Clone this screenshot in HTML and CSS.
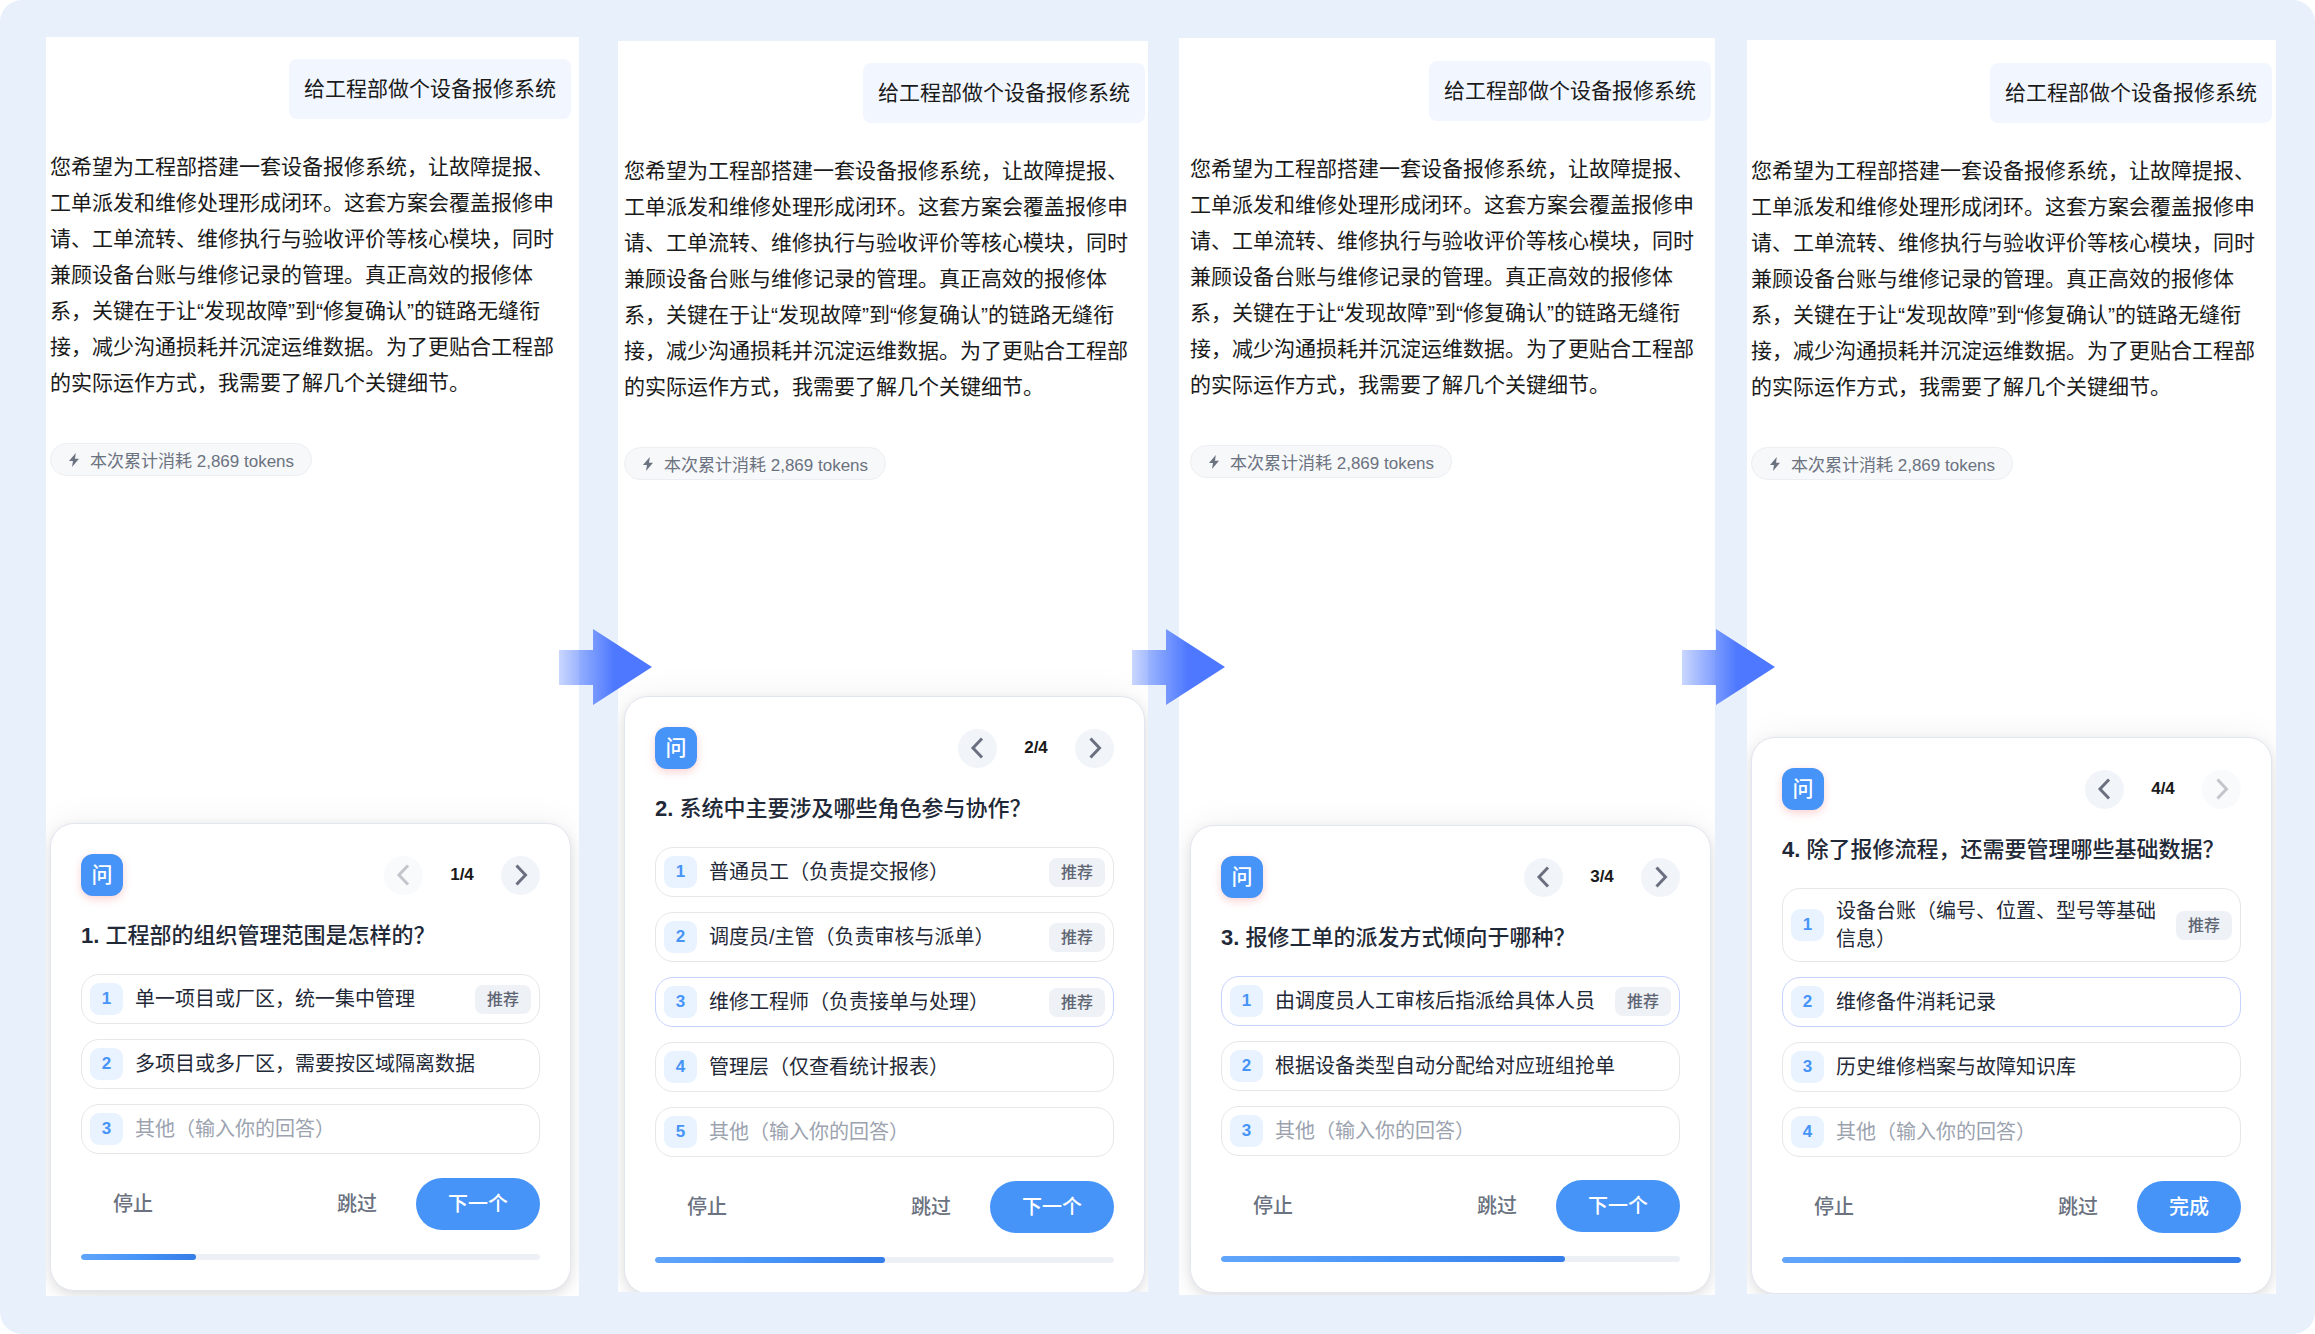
FILE: index.html
```html
<!DOCTYPE html>
<html lang="zh-CN">
<head>
<meta charset="utf-8">
<title>设备报修系统</title>
<link rel="stylesheet" href="styles.css">
</head>
<body>
<svg class="defs" aria-hidden="true">
  <defs>
    <linearGradient id="arrow-fill" x1="0" x2="1" y1="0" y2="0">
      <stop offset="0" stop-color="#4d78ff" stop-opacity=".3"/>
      <stop offset=".6" stop-color="#4d78ff"/>
      <stop offset="1" stop-color="#4d78ff"/>
    </linearGradient>
    <symbol id="arrow" viewBox="0 0 93 76"><path d="M0 21H34V0L93 38L34 76V56H0Z" fill="url(#arrow-fill)"/></symbol>
    <symbol id="bolt" viewBox="0 0 12 16"><path d="M7.800 1L1 9H5L4 15L11 6.700H7Z" fill="currentColor"/></symbol>
    <symbol id="prev" viewBox="0 0 24 24"><path d="M16 2.500L7 12L16 21.500" fill="none" stroke="currentColor" stroke-width="3"/></symbol>
    <symbol id="next" viewBox="0 0 24 24"><path d="M7.500 2.500L16.500 12L7.500 21.500" fill="none" stroke="currentColor" stroke-width="3"/></symbol>
  </defs>
</svg>
<main class="stage">
  <section class="step step-1">
    <div class="panel">
      <p class="bubble">给工程部做个设备报修系统</p>
      <p class="reply">您希望为工程部搭建一套设备报修系统，让故障提报、工单派发和维修处理形成闭环。这套方案会覆盖报修申请、工单流转、维修执行与验收评价等核心模块，同时兼顾设备台账与维修记录的管理。真正高效的报修体系，关键在于让“发现故障”到“修复确认”的链路无缝衔接，减少沟通损耗并沉淀运维数据。为了更贴合工程部的实际运作方式，我需要了解几个关键细节。</p>
      <p class="tokens"><svg class="bolt"><use href="#bolt"/></svg>本次累计消耗 2,869 tokens</p>
      <form class="card">
        <div class="card-head">
          <span class="badge">问</span>
          <div class="pager">
            <button type="button" class="page-btn" aria-label="上一题" disabled><svg class="chevron"><use href="#prev"/></svg></button>
            <span class="count">1/4</span>
            <button type="button" class="page-btn" aria-label="下一题"><svg class="chevron"><use href="#next"/></svg></button>
          </div>
        </div>
        <h2 class="question"><b>1.</b> 工程部的组织管理范围是怎样的？</h2>
        <div class="options">
          <button type="button" class="option"><span class="num">1</span><span class="text">单一项目或厂区，统一集中管理</span><span class="tag">推荐</span></button>
          <button type="button" class="option"><span class="num">2</span><span class="text">多项目或多厂区，需要按区域隔离数据</span></button>
          <label class="option"><span class="num">3</span><input class="other" type="text" placeholder="其他（输入你的回答）"></label>
        </div>
        <div class="actions">
          <button type="button" class="btn">停止</button>
          <button type="button" class="btn skip">跳过</button>
          <button type="button" class="btn primary">下一个</button>
        </div>
        <div class="track"><div class="bar" style="width:25%"></div></div>
      </form>
    </div>
  </section>

  <section class="step step-2">
    <svg class="arrow" aria-hidden="true"><use href="#arrow"/></svg>
    <div class="panel">
      <p class="bubble">给工程部做个设备报修系统</p>
      <p class="reply">您希望为工程部搭建一套设备报修系统，让故障提报、工单派发和维修处理形成闭环。这套方案会覆盖报修申请、工单流转、维修执行与验收评价等核心模块，同时兼顾设备台账与维修记录的管理。真正高效的报修体系，关键在于让“发现故障”到“修复确认”的链路无缝衔接，减少沟通损耗并沉淀运维数据。为了更贴合工程部的实际运作方式，我需要了解几个关键细节。</p>
      <p class="tokens"><svg class="bolt"><use href="#bolt"/></svg>本次累计消耗 2,869 tokens</p>
      <form class="card">
        <div class="card-head">
          <span class="badge">问</span>
          <div class="pager">
            <button type="button" class="page-btn" aria-label="上一题"><svg class="chevron"><use href="#prev"/></svg></button>
            <span class="count">2/4</span>
            <button type="button" class="page-btn" aria-label="下一题"><svg class="chevron"><use href="#next"/></svg></button>
          </div>
        </div>
        <h2 class="question"><b>2.</b> 系统中主要涉及哪些角色参与协作？</h2>
        <div class="options">
          <button type="button" class="option"><span class="num">1</span><span class="text">普通员工（负责提交报修）</span><span class="tag">推荐</span></button>
          <button type="button" class="option"><span class="num">2</span><span class="text">调度员/主管（负责审核与派单）</span><span class="tag">推荐</span></button>
          <button type="button" class="option active"><span class="num">3</span><span class="text">维修工程师（负责接单与处理）</span><span class="tag">推荐</span></button>
          <button type="button" class="option"><span class="num">4</span><span class="text">管理层（仅查看统计报表）</span></button>
          <label class="option"><span class="num">5</span><input class="other" type="text" placeholder="其他（输入你的回答）"></label>
        </div>
        <div class="actions">
          <button type="button" class="btn">停止</button>
          <button type="button" class="btn skip">跳过</button>
          <button type="button" class="btn primary">下一个</button>
        </div>
        <div class="track"><div class="bar" style="width:50%"></div></div>
      </form>
    </div>
  </section>

  <section class="step step-3">
    <svg class="arrow" aria-hidden="true"><use href="#arrow"/></svg>
    <div class="panel">
      <p class="bubble">给工程部做个设备报修系统</p>
      <p class="reply">您希望为工程部搭建一套设备报修系统，让故障提报、工单派发和维修处理形成闭环。这套方案会覆盖报修申请、工单流转、维修执行与验收评价等核心模块，同时兼顾设备台账与维修记录的管理。真正高效的报修体系，关键在于让“发现故障”到“修复确认”的链路无缝衔接，减少沟通损耗并沉淀运维数据。为了更贴合工程部的实际运作方式，我需要了解几个关键细节。</p>
      <p class="tokens"><svg class="bolt"><use href="#bolt"/></svg>本次累计消耗 2,869 tokens</p>
      <form class="card">
        <div class="card-head">
          <span class="badge">问</span>
          <div class="pager">
            <button type="button" class="page-btn" aria-label="上一题"><svg class="chevron"><use href="#prev"/></svg></button>
            <span class="count">3/4</span>
            <button type="button" class="page-btn" aria-label="下一题"><svg class="chevron"><use href="#next"/></svg></button>
          </div>
        </div>
        <h2 class="question"><b>3.</b> 报修工单的派发方式倾向于哪种？</h2>
        <div class="options">
          <button type="button" class="option active"><span class="num">1</span><span class="text">由调度员人工审核后指派给具体人员</span><span class="tag">推荐</span></button>
          <button type="button" class="option"><span class="num">2</span><span class="text">根据设备类型自动分配给对应班组抢单</span></button>
          <label class="option"><span class="num">3</span><input class="other" type="text" placeholder="其他（输入你的回答）"></label>
        </div>
        <div class="actions">
          <button type="button" class="btn">停止</button>
          <button type="button" class="btn skip">跳过</button>
          <button type="button" class="btn primary">下一个</button>
        </div>
        <div class="track"><div class="bar" style="width:75%"></div></div>
      </form>
    </div>
  </section>

  <section class="step step-4">
    <svg class="arrow" aria-hidden="true"><use href="#arrow"/></svg>
    <div class="panel">
      <p class="bubble">给工程部做个设备报修系统</p>
      <p class="reply">您希望为工程部搭建一套设备报修系统，让故障提报、工单派发和维修处理形成闭环。这套方案会覆盖报修申请、工单流转、维修执行与验收评价等核心模块，同时兼顾设备台账与维修记录的管理。真正高效的报修体系，关键在于让“发现故障”到“修复确认”的链路无缝衔接，减少沟通损耗并沉淀运维数据。为了更贴合工程部的实际运作方式，我需要了解几个关键细节。</p>
      <p class="tokens"><svg class="bolt"><use href="#bolt"/></svg>本次累计消耗 2,869 tokens</p>
      <form class="card">
        <div class="card-head">
          <span class="badge">问</span>
          <div class="pager">
            <button type="button" class="page-btn" aria-label="上一题"><svg class="chevron"><use href="#prev"/></svg></button>
            <span class="count">4/4</span>
            <button type="button" class="page-btn" aria-label="下一题" disabled><svg class="chevron"><use href="#next"/></svg></button>
          </div>
        </div>
        <h2 class="question"><b>4.</b> 除了报修流程，还需要管理哪些基础数据？</h2>
        <div class="options">
          <button type="button" class="option"><span class="num">1</span><span class="text">设备台账（编号、位置、型号等基础信息）</span><span class="tag">推荐</span></button>
          <button type="button" class="option active"><span class="num">2</span><span class="text">维修备件消耗记录</span></button>
          <button type="button" class="option"><span class="num">3</span><span class="text">历史维修档案与故障知识库</span></button>
          <label class="option"><span class="num">4</span><input class="other" type="text" placeholder="其他（输入你的回答）"></label>
        </div>
        <div class="actions">
          <button type="button" class="btn">停止</button>
          <button type="button" class="btn skip">跳过</button>
          <button type="button" class="btn primary">完成</button>
        </div>
        <div class="track"><div class="bar" style="width:100%"></div></div>
      </form>
    </div>
  </section>
</main>
</body>
</html>
```
FILE: styles.css
```css
* {
  box-sizing: border-box;
}

body {
  margin: 0;
  background: #fff;
  color: #1a1a1a;
  font-family: "Liberation Sans", "Noto Sans CJK SC", sans-serif;
}

p,
h2 {
  margin: 0;
}

button,
input {
  padding: 0;
  border: 0;
  background: none;
  color: inherit;
  font: inherit;
}

.defs {
  position: absolute;
  width: 0;
  height: 0;
}

.stage {
  display: flex;
  min-height: 100vh;
  padding: 37px 39px 38px 46px;
  border-radius: 22px;
  background: #e8f0fb;
}

/* One step of the flow: a cropped chat panel, with the arrow that leads to it. */
.step {
  position: relative;
  display: flex;
  min-width: 0;
}

.step-1 {
  flex: 533 1 0;
}

.step-2 {
  flex: 530 1 0;
  margin: 4px 0 4px 39px;
}

.step-3 {
  flex: 536 1 0;
  margin: 1px 0 1px 31px;
}

.step-4 {
  flex: 529 1 0;
  margin: 3px 0 2px 32px;
}

.panel {
  display: flex;
  flex: 1;
  flex-direction: column;
  align-items: flex-start;
  min-width: 0;
  overflow: hidden;
  background: #fff;
}

.step-1 .panel {
  padding: 22px 8px 5px 4px;
}

.step-2 .panel {
  padding: 22px 3px 0 6px;
}

.step-3 .panel {
  padding: 23px 4px 2px 11px;
}

.step-4 .panel {
  padding: 23px 4px 0 4px;
}

/* The second panel cuts off the lower edge of its card. */
.step-2 .card {
  margin-bottom: -2px;
}

.arrow {
  position: absolute;
  z-index: 1;
  top: 50%;
  left: -59px;
  width: 93px;
  height: 76px;
  margin-top: -38px;
}

.step-3 .arrow {
  left: -47px;
}

.step-4 .arrow {
  left: -65px;
}

.bubble {
  align-self: flex-end;
  padding: 12px 15px;
  border-radius: 8px;
  background: #f2f7ff;
  font-size: 21px;
  line-height: 36px;
}

.reply {
  margin-top: 30px;
  font-size: 21px;
  line-height: 36px;
}

.tokens {
  display: flex;
  align-items: center;
  gap: 10px;
  height: 33px;
  margin-top: 42px;
  padding: 0 17px;
  border: 1px solid #eceef1;
  border-radius: 17px;
  background: #f7f8fa;
  color: #6b7280;
  font-size: 17px;
}

.bolt {
  width: 12px;
  height: 16px;
}

.card {
  width: 100%;
  margin-top: auto;
  padding: 30px;
  border: 1px solid #e2e6f0;
  border-radius: 24px;
  background: #fff;
  box-shadow: 0 4px 12px rgba(0, 0, 0, .1), 0 0 36px rgba(0, 0, 0, .06);
}

.card-head {
  display: flex;
  align-items: center;
  justify-content: space-between;
}

.badge {
  width: 42px;
  height: 42px;
  border-radius: 12px;
  background: #4794f8;
  box-shadow: 0 3px 9px rgba(240, 80, 80, .25);
  color: #fff;
  font-size: 21px;
  font-weight: 500;
  line-height: 42px;
  text-align: center;
}

.pager {
  display: flex;
  align-items: center;
}

.page-btn {
  display: flex;
  align-items: center;
  justify-content: center;
  width: 39px;
  height: 39px;
  border-radius: 50%;
  background: #f1f4f9;
  color: #6b7080;
}

.page-btn:disabled {
  opacity: .4;
}

.chevron {
  width: 24px;
  height: 24px;
}

.count {
  width: 78px;
  font-size: 17px;
  font-weight: 700;
  text-align: center;
}

.question {
  margin: 24px 0 22px;
  color: #1f2937;
  font-size: 22px;
  font-weight: 500;
  line-height: 32px;
  white-space: nowrap;
}

.options {
  display: flex;
  flex-direction: column;
  gap: 15px;
}

.option {
  display: flex;
  align-items: center;
  width: 100%;
  padding: 8px;
  border: 1px solid #e5e7eb;
  border-radius: 18px;
  background: #fff;
  color: #1f2937;
  font-size: 20px;
  line-height: 28px;
  text-align: left;
}

.option.active {
  border-color: #c7d2fe;
}

.num {
  flex: none;
  width: 33px;
  height: 32px;
  margin-right: 12px;
  border-radius: 9px;
  background: #e8f3ff;
  color: #4794f8;
  font-size: 17px;
  font-weight: 700;
  line-height: 32px;
  text-align: center;
}

.text {
  flex: 1;
}

.tag {
  flex: none;
  margin-left: 15px;
  padding: 0 12px;
  border-radius: 8px;
  background: #eef1f6;
  color: #5f6673;
  font-size: 16px;
  font-weight: 500;
  line-height: 29px;
}

.other {
  flex: 1;
  min-width: 0;
  height: 28px;
  outline: 0;
}

.other::placeholder {
  color: #9ca3af;
  opacity: 1;
}

.actions {
  display: flex;
  align-items: center;
  gap: 7px;
  margin: 24px 0;
}

.btn {
  height: 52px;
  padding: 0 32px;
  border-radius: 26px;
  color: #6b7280;
  font-size: 20px;
  font-weight: 500;
  line-height: 28px;
}

.skip {
  margin-left: auto;
}

.primary {
  background: #4794f8;
  color: #fff;
}

.track {
  height: 6px;
  overflow: hidden;
  border-radius: 3px;
  background: #edf0f5;
}

.bar {
  height: 100%;
  border-radius: 3px;
  background: linear-gradient(90deg, #60a5fa, #4794f8 50%, #357de8);
}
```
